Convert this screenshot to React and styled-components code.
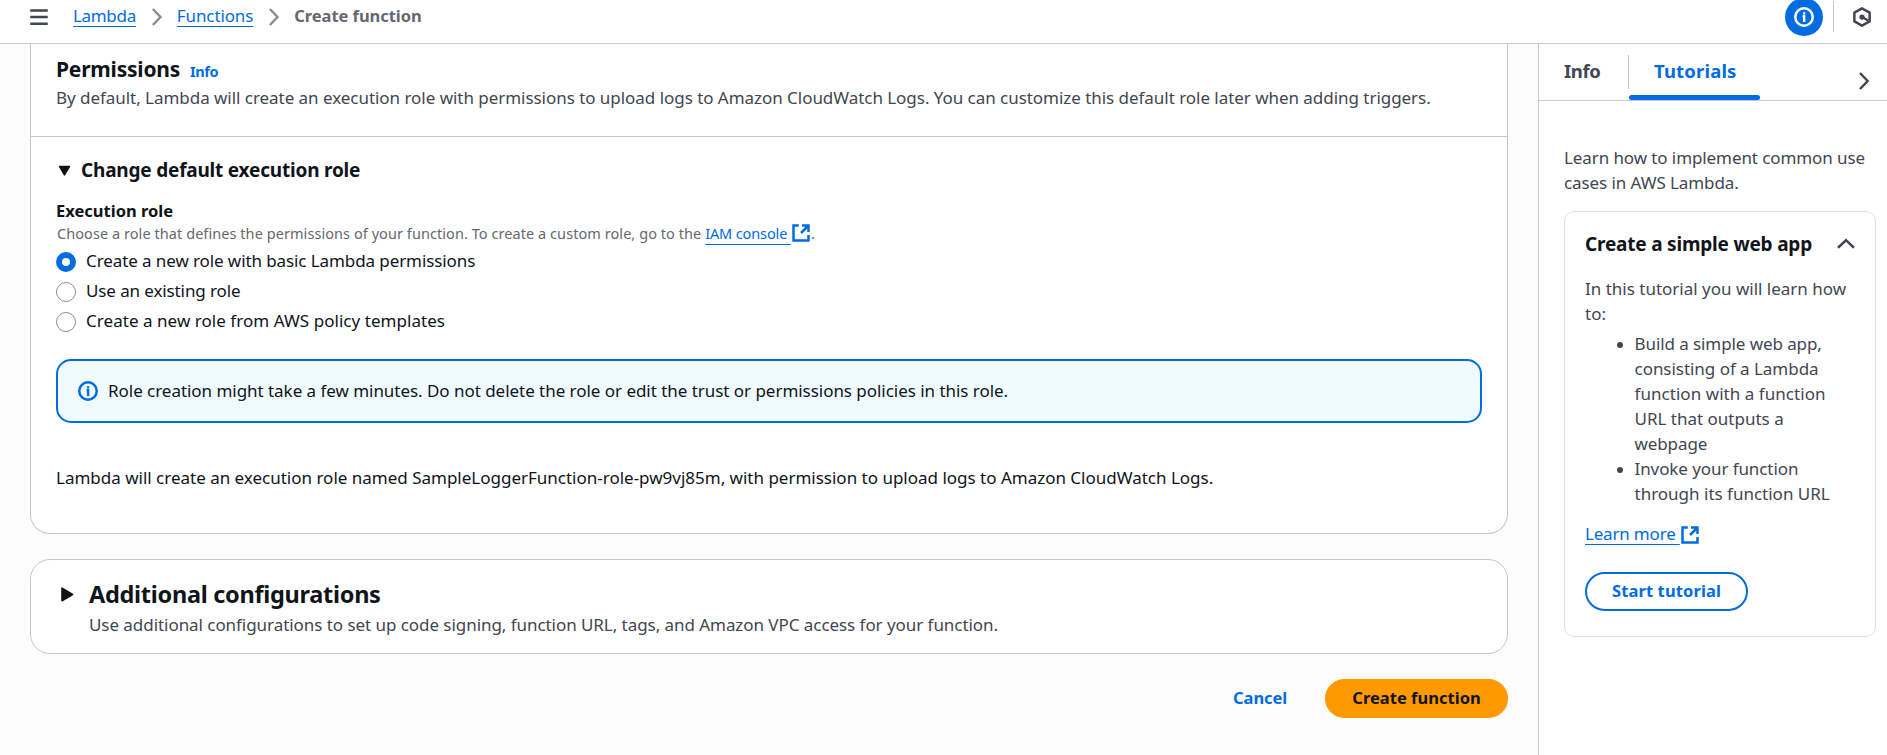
import React from "react";
import styled, { createGlobalStyle } from "styled-components";

const color = {
  text: "#0f141a",
  body: "#424650",
  hint: "#656871",
  link: "#006ce0",
  border: "#c6c6cd",
  chevron: "#8c8c94",
  page: "#fcfcfd",
};

const GlobalStyle = createGlobalStyle`
  *, *::before, *::after { box-sizing: border-box; }
  body {
    margin: 0;
    background: #fff;
    color: ${color.text};
    font-family: "Noto Sans", "Open Sans", sans-serif;
    font-size: 17px;
    line-height: 25px;
    overflow: hidden;
  }
  h2, h3, p, ul { margin: 0; padding: 0; }
  button { font-family: inherit; cursor: pointer; }
  svg { display: block; flex: none; }
`;

const Page = styled.div`
  display: flex;
  flex-direction: column;
  height: 755px;
  overflow: hidden;
`;

/* ---------- top bar ---------- */

const TopBar = styled.header`
  display: flex;
  align-items: flex-start;
  height: 44px;
  padding: 0 15px 0 29px;
  background: #fff;
  border-bottom: 1px solid ${color.border};
`;

const MenuButton = styled.button`
  border: 0;
  padding: 0;
  margin: 7px 24px 0 0;
  background: none;
  color: ${color.body};
`;

const Breadcrumbs = styled.nav`
  display: flex;
  align-items: flex-start;
  padding-top: 3px;

  svg {
    margin: 4px 10px 0 11px;
    color: ${color.chevron};
  }
`;

const Track = styled.span`
  letter-spacing: ${(p) => p.$em || 0}em;
`;

const Link = styled.a`
  color: ${color.link};
  letter-spacing: ${(p) => p.$em || 0}em;
  text-decoration: underline;
  text-decoration-thickness: 1px;
  text-underline-offset: ${(p) => p.$offset || 4}px;
  white-space: pre;
`;

const Current = styled.span`
  color: ${color.hint};
  font-size: 16.5px;
  font-weight: 700;
  letter-spacing: -0.003em;
`;

const Tools = styled.div`
  display: flex;
  align-items: flex-start;
  margin-left: auto;
`;

const InfoToggle = styled.button`
  display: flex;
  align-items: center;
  justify-content: center;
  width: 38px;
  height: 38px;
  margin-top: -2px;
  padding: 0;
  border: 0;
  border-radius: 50%;
  background: ${color.link};
  color: #fff;
`;

const ToolDivider = styled.span`
  width: 1px;
  height: 31px;
  margin: 1px 18px 0 10px;
  background: ${color.border};
`;

const HexButton = styled.button`
  margin-top: 7px;
  padding: 0;
  border: 0;
  background: none;
  color: ${color.body};
`;

/* ---------- main column ---------- */

const Columns = styled.div`
  display: flex;
  flex: 1;
  min-height: 0;
`;

const Main = styled.main`
  width: 1538px;
  padding: 0 30px;
  background: ${color.page};
`;

const Card = styled.section`
  background: #fff;
  border: 1px solid ${color.border};
  border-radius: 20px;
`;

const PermissionsCard = styled(Card)`
  height: 490px;
  border-top: 0;
  border-radius: 0 0 20px 20px;
`;

const CardHeader = styled.div`
  height: 93px;
  padding: 10px 26px 0;
  padding-left: 25px;
  border-bottom: 1px solid ${color.border};
`;

const TitleRow = styled.div`
  display: flex;
  align-items: baseline;
  gap: 10px;
  height: 31px;
`;

const Title = styled.h2`
  font-size: ${(p) => p.$size || 21}px;
  line-height: 30px;
  font-weight: 700;
  letter-spacing: ${(p) => p.$em}em;
`;

const InfoLink = styled.a`
  color: ${color.link};
  font-size: 14.5px;
  font-weight: 700;
  letter-spacing: -0.03em;
`;

const Description = styled.p`
  color: ${color.body};
  letter-spacing: ${(p) => p.$em || 0}em;
  white-space: nowrap;
`;

const CardBody = styled.div`
  padding: 21px 25px 0;
`;

const ExpandRow = styled.h3`
  display: flex;
  align-items: center;
  gap: 10px;
  padding-left: 2px;
  font-size: 19px;
  line-height: 25px;
  font-weight: 700;
  letter-spacing: -0.0105em;
`;

const FieldLabel = styled.div`
  margin-top: 15px;
  font-size: 16.5px;
  font-weight: 700;
  letter-spacing: 0;
`;

const FieldHint = styled.div`
  display: flex;
  align-items: center;
  height: 20px;
  padding-left: 1px;
  color: ${color.hint};
  font-size: 14.5px;
  line-height: 20px;
  white-space: pre;
`;

const RadioGroup = styled.div`
  display: flex;
  flex-direction: column;
  gap: 5px;
  margin-top: 5px;
`;

const RadioRow = styled.label`
  display: flex;
  align-items: flex-start;
  gap: 10px;
  letter-spacing: ${(p) => p.$em}em;
`;

const RadioMark = styled.span`
  width: 20px;
  height: 20px;
  margin-top: 4px;
  border: ${(p) => (p.$checked ? `6px solid ${color.link}` : `1.25px solid ${color.chevron}`)};
  border-radius: 50%;
  background: #fff;
`;

const Alert = styled.div`
  display: flex;
  align-items: flex-start;
  gap: 10px;
  height: 64px;
  margin-top: 26px;
  padding: 17px 20px 0;
  border: 2px solid ${color.link};
  border-radius: 15px;
  background: #f0fbff;
  letter-spacing: -0.0022em;

  svg { margin-top: 3px; color: ${color.link}; }
`;

const RoleNote = styled.p`
  margin-top: 42px;
  letter-spacing: -0.0003em;
`;

const ConfigCard = styled(Card)`
  display: flex;
  gap: 14px;
  height: 95px;
  margin-top: 25px;
  padding: 19px 29px 0;

  > svg { margin-top: 7px; }
`;

const ConfigText = styled.div`
  display: flex;
  flex-direction: column;
  gap: 3px;
`;

const Actions = styled.div`
  display: flex;
  align-items: center;
  justify-content: flex-end;
  gap: 36px;
  margin-top: 25px;
`;

const Button = styled.button`
  height: 39px;
  padding: 0 0 3px;
  border: 2px solid ${(p) => p.$border || "transparent"};
  border-radius: 20px;
  background: ${(p) => p.$bg || "transparent"};
  background-clip: border-box;
  color: ${(p) => p.$fg || color.link};
  font-size: 16.5px;
  line-height: 25px;
  font-weight: 700;
  letter-spacing: ${(p) => p.$em}em;
  width: ${(p) => (p.$width ? `${p.$width}px` : "auto")};
`;

/* ---------- help panel ---------- */

const Panel = styled.aside`
  flex: 1;
  border-left: 1px solid ${color.border};
  background: #fff;
`;

const TabBar = styled.div`
  display: flex;
  height: 57px;
  border-bottom: 1px solid ${color.border};
`;

const Tab = styled.button`
  display: flex;
  flex-direction: column;
  justify-content: space-between;
  height: 56px;
  padding: 14px 0 0;
  border: 0;
  background: none;
  color: ${(p) => (p.$active ? color.link : color.body)};
  font-size: 18.5px;
  line-height: 25px;
  font-weight: 700;
  text-align: left;
  width: ${(p) => p.$width}px;
  letter-spacing: ${(p) => p.$em}em;

  span { padding-left: 25px; }

  &::after {
    content: "";
    width: 100%;
    height: 5px;
    border-radius: 3px;
    background: ${(p) => (p.$active ? color.link : "transparent")};
  }
`;

const TabDivider = styled.span`
  width: 1px;
  height: 34px;
  margin-top: 11px;
  background: ${color.border};
`;

const CollapseButton = styled.button`
  margin: 27px 13px 0 auto;
  padding: 0;
  height: 20px;
  border: 0;
  background: none;
  color: ${color.body};
`;

const PanelBody = styled.div`
  padding: 44px 11px 0 25px;
  color: ${color.body};
`;

const Line = styled.span`
  display: block;
  white-space: nowrap;
  letter-spacing: ${(p) => p.$em || 0}em;
`;

const TutorialCard = styled.article`
  height: 426px;
  margin-top: 16px;
  padding: 20px 20px 0;
  border: 1px solid #dedee3;
  border-radius: 10px;
`;

const TutorialTitle = styled.h3`
  display: flex;
  align-items: center;
  justify-content: space-between;
  margin-bottom: 19px;
  color: ${color.text};
  font-size: 19px;
  line-height: 25px;
  letter-spacing: -0.0105em;

  svg { color: ${color.body}; margin: -1px -1px 1px 0; }
`;

const Steps = styled.ul`
  margin: 5px 0 15px 32px;
  list-style: none;
`;

const Step = styled.li`
  display: grid;
  grid-template-columns: 6px 1fr;
  column-gap: 11.5px;

  &::before {
    content: "";
    width: 6px;
    height: 6px;
    margin-top: 11px;
    border-radius: 50%;
    background: ${color.body};
  }
`;

const LearnMore = styled.div`
  display: flex;
  align-items: center;
  margin-bottom: 26px;

  svg { margin-top: 3px; }
`;

/* ---------- icons ---------- */

const Icon = ({ size = 20, children, ...rest }) => (
  <svg width={size} height={size} viewBox="0 0 16 16" fill="none" stroke="currentColor" strokeWidth="2" {...rest}>
    {children}
  </svg>
);

const MenuIcon = () => (
  <Icon><path d="M1 2.7h14M1 8h14M1 13.3h14" /></Icon>
);
const ChevronRight = () => (
  <Icon><path d="m4.7 1.6 6.1 6.4-6.1 6.4" /></Icon>
);
const CollapseIcon = () => (
  <Icon><path d="m4.8 1.6 6.1 6.4-6.1 6.4" /></Icon>
);
const ChevronUp = () => (
  <Icon><path d="M1.6 11 8 4.9l6.4 6.1" /></Icon>
);
const InfoIcon = () => (
  <Icon>
    <circle cx="8" cy="8" r="7" />
    <path d="M8.1 12V7.4H6.9M8.1 6V4.1" strokeWidth="1.9" />
  </Icon>
);
const HexIcon = () => (
  <Icon>
    <path d="M8 1.1 14.1 4.5v7L8 14.9 1.9 11.5v-7z" strokeLinejoin="round" />
    <circle cx="8" cy="8" r="2.1" fill="currentColor" stroke="none" />
    <path d="m8 8 5 2.8" />
  </Icon>
);
const ExternalIcon = () => (
  <Icon color={color.link}>
    <path d="M6.2 2H2v12h12V9.6M8.8 2H14v5.2M8 8l6-6" />
  </Icon>
);
const CaretDown = () => (
  <svg width="13" height="12" viewBox="0 0 13 12">
    <path d="M1.6 1.6h9.8L6.5 9.8z" fill={color.text} stroke={color.text} strokeWidth="1.6" strokeLinejoin="round" />
  </svg>
);
const CaretRight = () => (
  <svg width="15" height="18" viewBox="0 0 15 18">
    <path d="M2 2.2v12.6L12.6 8.5z" fill={color.text} stroke={color.text} strokeWidth="1.6" strokeLinejoin="round" />
  </svg>
);

const ROLES = [
  { label: "Create a new role with basic Lambda permissions", em: -0.0055, checked: true },
  { label: "Use an existing role", em: -0.0065 },
  { label: "Create a new role from AWS policy templates", em: 0.0027 },
];

export default function App() {
  return (
    <>
      <GlobalStyle />
      <Page>
        <TopBar>
          <MenuButton aria-label="Open navigation"><MenuIcon /></MenuButton>
          <Breadcrumbs>
            <Link $em={-0.019}>Lambda</Link>
            <ChevronRight />
            <Link $em={-0.007}>Functions</Link>
            <ChevronRight />
            <Current>Create function</Current>
          </Breadcrumbs>
          <Tools>
            <InfoToggle aria-label="Help"><InfoIcon /></InfoToggle>
            <ToolDivider />
            <HexButton aria-label="Assistant"><HexIcon /></HexButton>
          </Tools>
        </TopBar>

        <Columns>
          <Main>
            <PermissionsCard>
              <CardHeader>
                <TitleRow>
                  <Title $em={-0.01}>Permissions</Title>
                  <InfoLink>Info</InfoLink>
                </TitleRow>
                <Description $em={-0.0023}>
                  By default, Lambda will create an execution role with permissions to upload logs to Amazon
                  CloudWatch Logs. You can customize this default role later when adding triggers.
                </Description>
              </CardHeader>
              <CardBody>
                <ExpandRow><CaretDown />Change default execution role</ExpandRow>
                <FieldLabel>Execution role</FieldLabel>
                <FieldHint>
                  <Track $em={0.0043}>
                    {"Choose a role that defines the permissions of your function. To create a custom role, go to the "}
                  </Track>
                  <Link $em={-0.0085} $offset={5}>{"IAM console "}</Link>
                  <ExternalIcon />
                  <span>.</span>
                </FieldHint>
                <RadioGroup>
                  {ROLES.map((r) => (
                    <RadioRow key={r.label} $em={r.em}>
                      <RadioMark $checked={r.checked} />
                      {r.label}
                    </RadioRow>
                  ))}
                </RadioGroup>
                <Alert>
                  <InfoIcon />
                  Role creation might take a few minutes. Do not delete the role or edit the trust or permissions
                  policies in this role.
                </Alert>
                <RoleNote>
                  Lambda will create an execution role named SampleLoggerFunction-role-pw9vj85m, with permission to
                  upload logs to Amazon CloudWatch Logs.
                </RoleNote>
              </CardBody>
            </PermissionsCard>

            <ConfigCard>
              <CaretRight />
              <ConfigText>
                <Title $size={23.5} $em={-0.0122}>Additional configurations</Title>
                <Description $em={-0.0031}>
                  Use additional configurations to set up code signing, function URL, tags, and Amazon VPC access
                  for your function.
                </Description>
              </ConfigText>
            </ConfigCard>

            <Actions>
              <Button $em={-0.006}>Cancel</Button>
              <Button $em={0.001} $bg="#ff9900" $border="#ff9900" $fg={color.text} $width={183}>
                Create function
              </Button>
            </Actions>
          </Main>

          <Panel>
            <TabBar>
              <Tab $width={89} $em={-0.02}><span>Info</span></Tab>
              <TabDivider />
              <Tab $active $width={131} $em={0.009}><span>Tutorials</span></Tab>
              <CollapseButton aria-label="Close panel"><CollapseIcon /></CollapseButton>
            </TabBar>
            <PanelBody>
              <p>
                <Line $em={-0.0054}>Learn how to implement common use</Line>
                <Line $em={-0.0049}>cases in AWS Lambda.</Line>
              </p>
              <TutorialCard>
                <TutorialTitle>Create a simple web app<ChevronUp /></TutorialTitle>
                <p>
                  <Line $em={-0.0002}>In this tutorial you will learn how</Line>
                  <Line>to:</Line>
                </p>
                <Steps>
                  <Step>
                    <div>
                      <Line $em={-0.005}>Build a simple web app,</Line>
                      <Line $em={-0.002}>consisting of a Lambda</Line>
                      <Line $em={0.003}>function with a function</Line>
                      <Line $em={0}>URL that outputs a</Line>
                      <Line $em={-0.006}>webpage</Line>
                    </div>
                  </Step>
                  <Step>
                    <div>
                      <Line $em={-0.005}>Invoke your function</Line>
                      <Line>through its function URL</Line>
                    </div>
                  </Step>
                </Steps>
                <LearnMore>
                  <Link $em={-0.011}>{"Learn more "}</Link>
                  <ExternalIcon />
                </LearnMore>
                <Button $em={0.0073} $border={color.link} $width={163}>Start tutorial</Button>
              </TutorialCard>
            </PanelBody>
          </Panel>
        </Columns>
      </Page>
    </>
  );
}
